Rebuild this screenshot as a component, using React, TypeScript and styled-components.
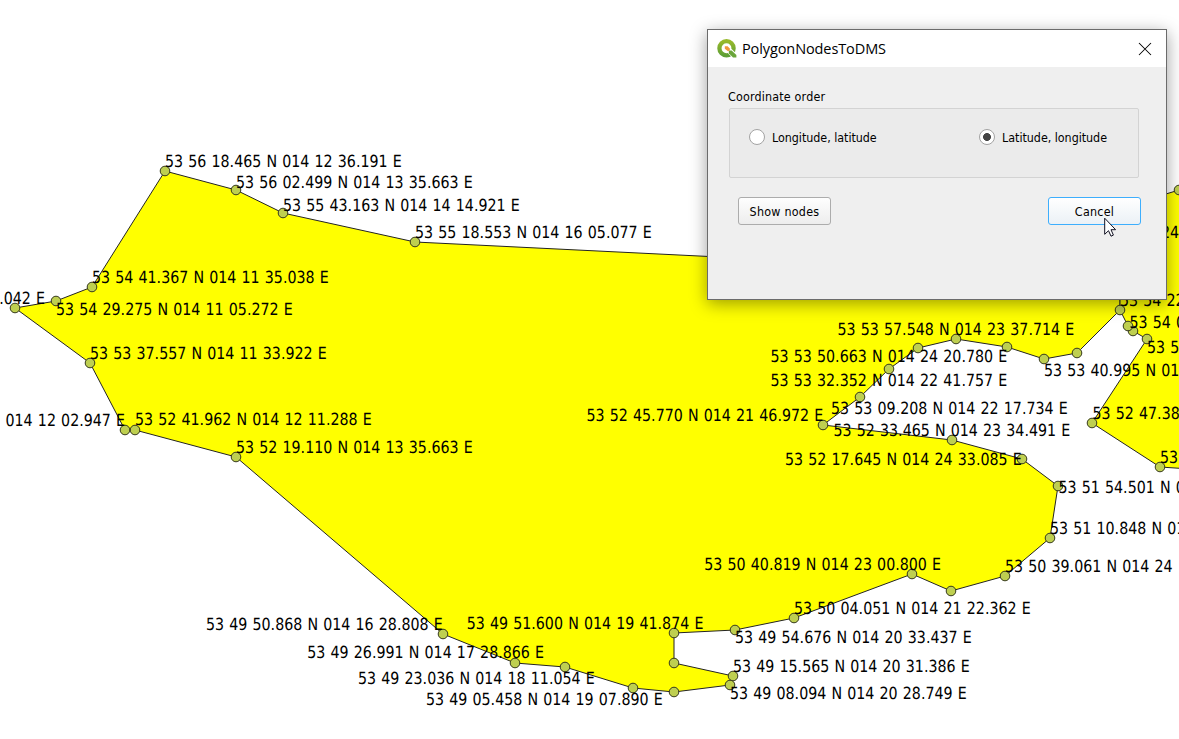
import React from "react";
import styled, { createGlobalStyle } from "styled-components";

const GlobalStyle = createGlobalStyle`
  html, body { margin: 0; padding: 0; background: #fff; overflow: hidden; }
  * { box-sizing: border-box; }
`;

const Canvas = styled.main`
  position: relative;
  width: 1179px;
  height: 739px;
  overflow: hidden;
  background: #fff;
`;

const MapView = styled.svg`
  display: block;
  font-family: "DejaVu Sans Condensed", "DejaVu Sans", sans-serif;
  font-stretch: condensed;
  font-size: 16.7px;
  word-spacing: 0.7px;
  text-rendering: geometricPrecision;
`;

const Dialog = styled.section`
  position: absolute;
  left: 707px;
  top: 29px;
  width: 460px;
  height: 271px;
  display: flex;
  flex-direction: column;
  border: 1px solid #6b6b6b;
  background: #efefef;
  box-shadow: 0 4px 16px rgba(0, 0, 0, 0.38);
  font-family: "DejaVu Sans Condensed", "DejaVu Sans", sans-serif;
  font-stretch: condensed;
  font-size: 12.4px;
  color: #000;
`;

const TitleBar = styled.header`
  display: flex;
  align-items: center;
  height: 37px;
  padding: 0 14px 0 9px;
  background: #fff;
`;

const Title = styled.h1`
  flex: 1;
  margin: 0 0 0 5px;
  font: 400 14.5px "Open Sans", sans-serif;
  letter-spacing: -0.1px;
`;

const Body = styled.div`
  display: flex;
  flex-direction: column;
  padding: 21px 27px 0 20px;
`;

const GroupTitle = styled.div`
  height: 20px;
  line-height: 17px;
  letter-spacing: 0.18px;
`;

const GroupBox = styled.div`
  display: flex;
  justify-content: space-between;
  height: 70px;
  margin-left: 1px;
  padding: 20px 31px 0 19px;
  border: 1px solid #d3d3d3;
  border-radius: 2px;
  background: #ebebeb;
`;

const Option = styled.label`
  display: flex;
  align-items: center;
  gap: 7px;
  height: 16px;
  line-height: 18px;
`;

const OptionText = styled.span`
  padding-top: 1px;
  letter-spacing: -0.03px;
`;

const Radio = styled.span<{ $checked?: boolean }>`
  width: 16px;
  height: 16px;
  border: 1px solid #a3a3a3;
  border-radius: 50%;
  background: ${(p) =>
    p.$checked ? "radial-gradient(circle, #444 3.6px, #fff 4.3px)" : "#fff"};
`;

const Actions = styled.div`
  display: flex;
  justify-content: space-between;
  padding: 19px 0 0 10px;
  margin-right: -2px;
`;

const Button = styled.button<{ $active?: boolean }>`
  width: 93px;
  height: 28px;
  padding: 1px 0 0 0;
  border: 1px solid ${(p) => (p.$active ? "#3daefd" : "#acacac")};
  border-radius: 3px;
  background: ${(p) =>
    p.$active
      ? "linear-gradient(#fff, #ebf1f6)"
      : "linear-gradient(#fefefe, #ededed)"};
  font: inherit;
  letter-spacing: 0.25px;
  color: inherit;
`;

const Pointer = styled.svg`
  position: absolute;
  left: 1104px;
  top: 217px;
`;

type Point = [number, number];

const mainland: Point[] = [
  [165, 171], [236, 190], [283, 213], [415, 242], [760, 259], [1120, 265],
];
const coast: Point[] = [
  [1120, 310], [1077, 353], [1044, 359], [1007, 347], [956, 339], [918, 348],
  [889, 369], [860, 397], [823, 425], [952, 440], [1022, 459], [1058, 486],
  [1050, 538], [1005, 576], [951, 591], [912, 574], [794, 618], [735, 630],
  [674, 633], [674, 663], [733, 676], [730, 685], [674, 692], [633, 688],
  [565, 667], [515, 663], [443, 634], [236, 457], [135, 430], [125, 430],
  [90, 363], [15, 308], [56, 301], [92, 287],
];
const east: Point[] = [
  [1179, 190], [1120, 208], [1120, 310], [1128, 326], [1133, 331],
  [1147, 339], [1092, 423], [1160, 467], [1190, 469], [1190, 187],
];
const nodes: Point[] = [
  ...mainland.slice(0, 4), ...coast,
  [1133, 331], [1128, 326], [1147, 339], [1092, 423], [1160, 467], [1179, 190],
];

const labels: [number, number, string, boolean?][] = [
  [165, 166.5, "53 56 18.465 N 014 12 36.191 E"],
  [236, 188.3, "53 56 02.499 N 014 13 35.663 E"],
  [283, 211.3, "53 55 43.163 N 014 14 14.921 E"],
  [415, 238, "53 55 18.553 N 014 16 05.077 E"],
  [92, 282.8, "53 54 41.367 N 014 11 35.038 E"],
  [56, 315.3, "53 54 29.275 N 014 11 05.272 E"],
  [45, 304, ".042 E", true],
  [90, 358.8, "53 53 37.557 N 014 11 33.922 E"],
  [125, 425.8, "014 12 02.947 E", true],
  [135, 425.3, "53 52 41.962 N 014 12 11.288 E"],
  [236, 452.7, "53 52 19.110 N 014 13 35.663 E"],
  [206, 629.7, "53 49 50.868 N 014 16 28.808 E"],
  [307.3, 658.2, "53 49 26.991 N 014 17 28.866 E"],
  [358, 684, "53 49 23.036 N 014 18 11.054 E"],
  [426, 705, "53 49 05.458 N 014 19 07.890 E"],
  [466.7, 629, "53 49 51.600 N 014 19 41.874 E"],
  [735, 643.3, "53 49 54.676 N 014 20 33.437 E"],
  [733, 672, "53 49 15.565 N 014 20 31.386 E"],
  [730, 699, "53 49 08.094 N 014 20 28.749 E"],
  [794, 613.7, "53 50 04.051 N 014 21 22.362 E"],
  [704.3, 570.2, "53 50 40.819 N 014 23 00.800 E"],
  [1005, 572, "53 50 39.061 N 014 24"],
  [1050, 534, "53 51 10.848 N 01"],
  [1058.5, 492.5, "53 51 54.501 N 01"],
  [785, 465, "53 52 17.645 N 014 24 33.085 E"],
  [833.5, 435.5, "53 52 33.465 N 014 23 34.491 E"],
  [831, 413.7, "53 53 09.208 N 014 22 17.734 E"],
  [586.5, 420.7, "53 52 45.770 N 014 21 46.972 E"],
  [770.5, 386.2, "53 53 32.352 N 014 22 41.757 E"],
  [770.5, 361.6, "53 53 50.663 N 014 24 20.780 E"],
  [837.5, 335, "53 53 57.548 N 014 23 37.714 E"],
  [1044, 375.7, "53 53 40.995 N 01"],
  [1092.5, 419, "53 52 47.38"],
  [1160, 463, "53"],
  [1147, 353, "53 5"],
  [1129.5, 328, "53 54 0"],
  [1120, 305.5, "53 54 22"],
  [1161, 238, "24"],
];

const toPoints = (points: Point[]) => points.map((p) => p.join(",")).join(" ");

export default function App() {
  return (
    <Canvas>
      <GlobalStyle />
      <MapView width="1179" height="739" viewBox="0 0 1179 739">
        <g fill="#ff0" stroke="#232323" strokeWidth="1">
          <polygon points={toPoints([...mainland, ...coast])} />
          <polygon points={toPoints(east)} />
        </g>
        <g fill="#becf50" stroke="#35381c" strokeWidth="1">
          {nodes.map(([x, y], i) => (
            <circle key={i} cx={x} cy={y} r="4.8" />
          ))}
        </g>
        <g fill="#000">
          {labels.map(([x, y, text, end]) => (
            <text
              key={`${x}-${y}`}
              transform={`translate(${x} ${y}) scale(0.947 1)`}
              textAnchor={end ? "end" : "start"}
            >
              {text}
            </text>
          ))}
        </g>
      </MapView>

      <Dialog role="dialog" aria-label="PolygonNodesToDMS">
        <TitleBar>
          <svg width="20" height="20" viewBox="0 0 20 20">
            <defs>
              <linearGradient id="ring" x1="0" y1="0" x2="0" y2="1">
                <stop offset="0" stopColor="#97b92b" />
                <stop offset="1" stopColor="#5f9f36" />
              </linearGradient>
            </defs>
            <circle cx="9.5" cy="9.3" r="7.1" fill="none" stroke="url(#ring)" strokeWidth="4.3" />
            <path d="M10.4 10.6 L14.6 10 L20 15.2 L20 19 L15.8 19 L10.4 13.8Z" fill="#fff" />
            <path d="M11.8 11.4 L14.6 11.4 L19.4 16 L19.4 18.4 L16 18.4 L11.8 14.2Z" fill="#6aa53a" />
            <path d="M7.8 7.2 L10.6 7.2 L13 9.8 L12.6 11.4 L11 12.2 L7.8 9.8Z" fill="#f0963c" />
          </svg>
          <Title>PolygonNodesToDMS</Title>
          <svg width="14" height="14" viewBox="0 0 14 14">
            <path d="M1 1 L13 13 M13 1 L1 13" stroke="#000" strokeWidth="1.05" />
          </svg>
        </TitleBar>
        <Body>
          <GroupTitle>Coordinate order</GroupTitle>
          <GroupBox>
            <Option>
              <Radio />
              <OptionText>Longitude, latitude</OptionText>
            </Option>
            <Option>
              <Radio $checked />
              <OptionText>Latitude, longitude</OptionText>
            </Option>
          </GroupBox>
          <Actions>
            <Button>Show nodes</Button>
            <Button $active>Cancel</Button>
          </Actions>
        </Body>
      </Dialog>

      <Pointer width="14" height="22" viewBox="0 0 14 22">
        <path
          d="M0.7 1.2 V17.3 L4.5 13.7 L7 19.2 L9.4 18.1 L7 12.7 H11.6Z"
          fill="#fff"
          stroke="#111122"
        />
      </Pointer>
    </Canvas>
  );
}
